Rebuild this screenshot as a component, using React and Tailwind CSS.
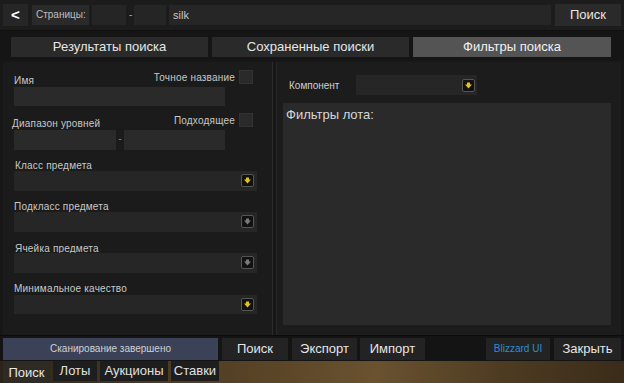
import React from "react";

const F = { fontFamily: '"Liberation Sans", Arial, sans-serif' };

function DropBtn({ yellow = true }) {
  return (
    <div className="w-[13px] h-[13px] rounded-[2px] bg-[#111] border border-[#555] flex items-center justify-center">
      <svg width="9" height="9" viewBox="0 0 9 9">
        <path d="M4.5 7.5 L1 3.5 H3 V1.5 H6 V3.5 H8 Z" fill={yellow ? "#e3c21a" : "#7a7a7a"} />
      </svg>
    </div>
  );
}

function Label({ children, className = "" }) {
  return <div className={"text-[10px] leading-[12px] text-[#c8c8c8] tracking-[0.2px] " + className}>{children}</div>;
}

function Select({ yellow = true, h = "h-[20px]" }) {
  return (
    <div className={"w-[243px] bg-[#262626] flex items-center justify-end pr-[3px] " + h}>
      <DropBtn yellow={yellow} />
    </div>
  );
}

export default function App() {
  return (
    <div style={F} className="w-[624px] h-[383px] bg-[#171717] flex flex-col overflow-hidden">
      {/* Top bar */}
      <div className="h-[31px] bg-[#1c1c1c] flex items-center px-[3px] gap-[3px] border-b border-[#101010]">
        <div className="w-[25px] h-[22px] bg-[#262626] flex items-center justify-center text-white text-[15px] font-bold">&lt;</div>
        <div className="w-[57px] h-[20px] ml-[1px] bg-[#2a2a2a] flex items-center pl-[4px] text-[10px] text-[#bdbdbd]">Страницы:</div>
        <div className="w-[34px] h-[20px] bg-[#252525]" />
        <div className="w-[2px] text-[10px] text-[#aaa] text-center">-</div>
        <div className="w-[32px] h-[20px] bg-[#252525]" />
        <div className="flex-1 h-[20px] bg-[#262626] flex items-center pl-[4px] text-[11px] text-[#c8c8c8]">silk</div>
        <div className="w-[66px] h-[22px] ml-[1px] bg-[#2a2a2a] flex items-center justify-center text-[13px] text-[#e6e6e6]">Поиск</div>
      </div>

      {/* Tabs */}
      <div className="h-[29px] flex items-start pt-[6px] pl-[11px] gap-[4px] bg-[#151515]">
        <div className="w-[197px] h-[20px] bg-[#2a2a2a] flex items-center justify-center text-[13px] text-[#e6e6e6]">Результаты поиска</div>
        <div className="w-[197px] h-[20px] bg-[#2a2a2a] flex items-center justify-center text-[13px] text-[#e6e6e6]">Сохраненные поиски</div>
        <div className="w-[198px] h-[20px] bg-[#545454] flex items-center justify-center text-[13px] text-[#f0f0f0]">Фильтры поиска</div>
      </div>

      {/* Main */}
      <div className="h-[276px] flex px-[3px] pt-[2px] gap-[3px]">
        {/* Left panel */}
        <div className="w-[270px] h-full bg-[#1b1b1b] border-r border-[#2b2b2b] pl-[11px] pt-[8px]">
          <div className="relative h-[36px]">
            <div className="flex justify-end items-start pr-[19px]">
              <Label className="mt-[2px] mr-[4px]">Точное название</Label>
              <div className="w-[14px] h-[14px] bg-[#2a2a2a] border border-[#333]" />
            </div>
            <Label className="absolute left-0 top-[5px]">Имя</Label>
            <div className="absolute left-0 top-[17px] w-[211px] h-[19px] bg-[#2a2a2a]" />
          </div>
          <div className="relative h-[38px] mt-[6px]">
            <div className="flex justify-end items-start pr-[19px] pt-[1px]">
              <Label className="mt-[2px] mr-[4px]">Подходящее</Label>
              <div className="w-[14px] h-[14px] bg-[#2a2a2a] border border-[#333]" />
            </div>
            <Label className="absolute left-[-2px] top-[6px]">Диапазон уровней</Label>
            <div className="absolute left-0 top-[18px] flex items-center">
              <div className="w-[102px] h-[20px] bg-[#2a2a2a]" />
              <div className="w-[8px] text-[9px] text-[#aaa] text-center">-</div>
              <div className="w-[101px] h-[20px] bg-[#2a2a2a]" />
            </div>
          </div>
          <div className="flex flex-col mt-[10px]">
            <Label className="ml-[1px]">Класс предмета</Label>
            <div className="mt-[-1px]"><Select /></div>
            <Label className="mt-[10px]">Подкласс предмета</Label>
            <div className="mt-[-1px]"><Select yellow={false} /></div>
            <Label className="mt-[11px] ml-[1px]">Ячейка предмета</Label>
            <div className="mt-[-2px]"><Select yellow={false} /></div>
            <Label className="mt-[10px]">Минимальное качество</Label>
            <div className="mt-[0px]"><Select h="h-[19px]" /></div>
          </div>
        </div>

        {/* Right panel */}
        <div className="flex-1 h-full bg-[#1c1c1c] border-l border-[#262626] pl-[6px] pr-[10px] pt-[13px]">
          <div className="flex items-center h-[21px]">
            <div className="w-[73px] pl-[6px] text-[10px] text-[#cfcfcf]">Компонент</div>
            <div className="w-[121px] h-[20px] bg-[#262626] flex items-center justify-end pr-[2px]">
              <DropBtn />
            </div>
          </div>
          <div className="mt-[7px] h-[222px] bg-[#2a2a2a] pl-[3px] pt-[2px] text-[13px] text-[#d8d8d8]">Фильтры лота:</div>
        </div>
      </div>

      {/* Bottom bar */}
      <div className="h-[26px] flex items-center px-[3px] bg-[#141414] border-t border-[#0c0c0c]">
        <div className="w-[215px] h-[22px] bg-[#3b4258] flex items-center justify-center text-[10px] text-[#d0d0d0]">Сканирование завершено</div>
        <div className="w-[66px] h-[22px] ml-[4px] bg-[#232323] flex items-center justify-center text-[13px] text-[#e6e6e6]">Поиск</div>
        <div className="w-[65px] h-[22px] ml-[4px] bg-[#232323] flex items-center justify-center text-[13px] text-[#e6e6e6]">Экспорт</div>
        <div className="w-[65px] h-[22px] ml-[3px] bg-[#232323] flex items-center justify-center text-[13px] text-[#e6e6e6]">Импорт</div>
        <div className="flex-1" />
        <div className="w-[64px] h-[22px] bg-[#232323] flex items-center justify-center text-[10px] text-[#2a8fcf]">Blizzard UI</div>
        <div className="w-[67px] h-[22px] ml-[4px] bg-[#232323] flex items-center justify-center text-[13px] text-[#e6e6e6]">Закрыть</div>
      </div>

      {/* Bottom tabs */}
      <div className="flex-1 flex items-start gap-[3px] px-[3px] bg-[linear-gradient(90deg,#2c2418_0%,#4a3a22_25%,#5c4628_45%,#6a5230_60%,#4e3c22_80%,#3a2c1a_100%)]">
        <div className="w-[47px] h-[22px] bg-[#2e2a24] flex items-end justify-center pb-[1px] text-[13px] text-[#e8e8e8]">Поиск</div>
        <div className="w-[44px] h-[20px] bg-[#1e1e1e] flex items-center justify-center text-[13px] text-[#e0e0e0]">Лоты</div>
        <div className="w-[68px] h-[20px] bg-[#1e1e1e] flex items-center justify-center text-[13px] text-[#e0e0e0]">Аукционы</div>
        <div className="w-[48px] h-[20px] bg-[#1e1e1e] flex items-center justify-center text-[13px] text-[#e0e0e0]">Ставки</div>
      </div>
    </div>
  );
}
